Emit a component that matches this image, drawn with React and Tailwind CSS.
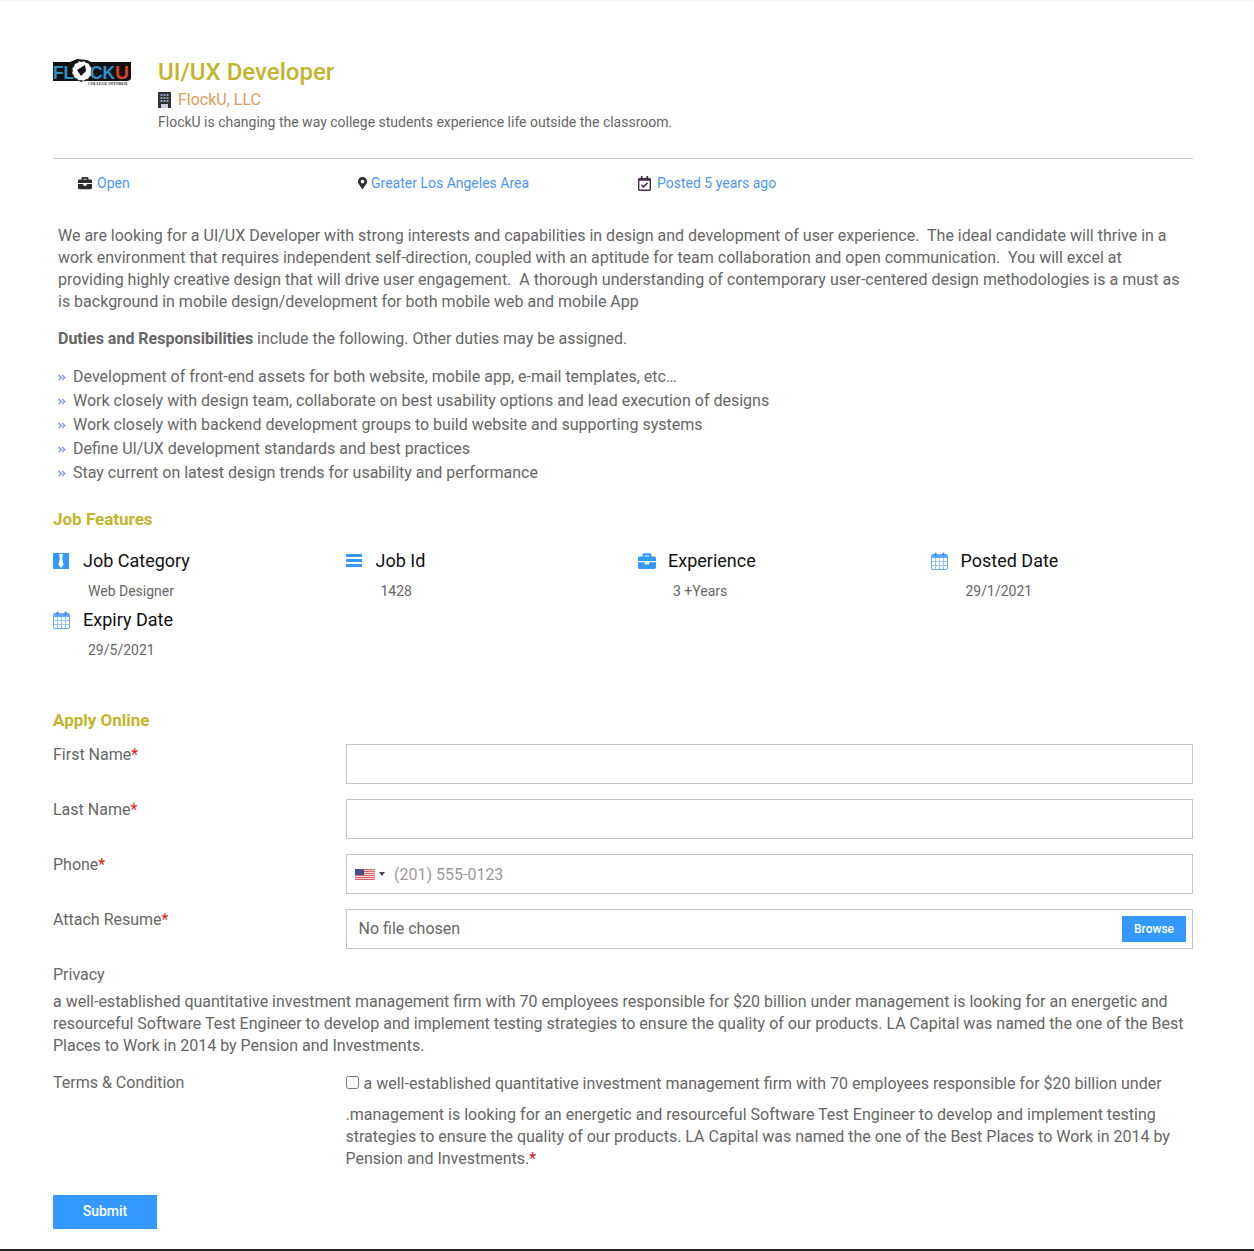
import React from 'react';
import { FaBriefcase, FaMapMarkerAlt, FaRegCalendarCheck, FaAngleDoubleRight } from 'react-icons/fa';

const duties = [
  'Development of front-end assets for both website, mobile app, e-mail templates, etc…',
  'Work closely with design team, collaborate on best usability options and lead execution of designs',
  'Work closely with backend development groups to build website and supporting systems',
  'Define UI/UX development standards and best practices',
  'Stay current on latest design trends for usability and performance',
];

const Logo = () => (
  <svg width="78" height="28" viewBox="0 0 78 28" className="block">
    <path d="M0 3 H17 L24 0 L34 1 L38 3 H78 V19 Q78 22 73 22 H0 Z" fill="#111" />
    <text x="0" y="20" fontFamily="Liberation Sans" fontWeight="700" fontSize="18" fill="#2a93cf" textLength="21" lengthAdjust="spacingAndGlyphs">FL</text>
    <circle cx="29" cy="12" r="10" fill="#fff" stroke="#222" strokeWidth="1.500" strokeDasharray="3 2" />
    <path d="M24 11 L32 6 L33 12 L28 17 Z" fill="#111" />
    <text x="37" y="20" fontFamily="Liberation Sans" fontWeight="700" fontSize="18" fill="#2a93cf" textLength="25" lengthAdjust="spacingAndGlyphs">CK</text>
    <text x="62" y="20" fontFamily="Liberation Sans" fontWeight="700" fontSize="18" fill="#d8402d" textLength="14" lengthAdjust="spacingAndGlyphs">U</text>
    <text x="35" y="26" fontFamily="Liberation Serif" fontWeight="700" fontSize="4" fill="#222" textLength="40" lengthAdjust="spacingAndGlyphs">COLLEGE OFFERED.</text>
  </svg>
);

const BuildingIcon = () => (
  <svg width="13" height="16" viewBox="0 0 13 16" className="shrink-0">
    <rect width="13" height="16" fill="#33302f" />
    {[2, 5, 8].map((x) =>
      [2, 5, 8].map((y) => <rect key={`${x}-${y}`} x={x + 0.5} y={y} width="2" height="2" fill="#8aa0c0" />)
    )}
    <rect x="3" y="12" width="7" height="4" fill="#c9d3e0" />
  </svg>
);

const TieIcon = () => (
  <svg width="16" height="16" viewBox="0 0 16 16">
    <rect width="16" height="16" fill="#3399ff" />
    <path d="M6 1 H10 L9.200 5 L10.500 12 L8 15 L5.500 12 L6.800 5 Z" fill="#fff" />
  </svg>
);

const BarsIcon = () => (
  <svg width="16" height="14" viewBox="0 0 16 14">
    <rect width="16" height="3" fill="#3399ff" />
    <rect y="5" width="16" height="3" fill="#3399ff" />
    <rect y="10" width="16" height="3" fill="#3399ff" />
  </svg>
);

const CalendarIcon = () => (
  <svg width="17" height="18" viewBox="0 0 17 18">
    <rect x="0.500" y="2.500" width="16" height="15" rx="1.500" fill="#fff" stroke="#66aaff" />
    <rect x="0.500" y="2.500" width="16" height="3.500" fill="#66aaff" />
    <rect x="3.500" y="0.500" width="2" height="4" rx="1" fill="#3d8df0" />
    <rect x="11.500" y="0.500" width="2" height="4" rx="1" fill="#3d8df0" />
    <path d="M4.500 6 V17 M8.500 6 V17 M12.500 6 V17 M1 9.500 H16 M1 13.500 H16" stroke="#99c5ff" strokeWidth="1" fill="none" />
  </svg>
);

const Flag = () => (
  <svg width="20" height="11" viewBox="0 0 20 11" className="shrink-0">
    <rect width="20" height="11" fill="#f4d5d8" />
    {[0, 2, 4, 6, 8, 10].map((y) => (
      <rect key={y} y={y} width="20" height="1" fill="#d8606a" />
    ))}
    <rect width="9" height="6" fill="#44508c" />
  </svg>
);

const Feature = ({ icon, title, value }) => (
  <div>
    <div className="flex items-center h-[24px]">
      <span className="w-[30px] shrink-0 flex items-center">{icon}</span>
      <span className="text-[18px] leading-[24px] text-[#111]">{title}</span>
    </div>
    <div className="pl-[35px] mt-[8px] h-[27px] text-[14px] leading-[20px] text-[#666]">{value}</div>
  </div>
);

const Req = () => <span className="text-[#e02020]">*</span>;

const FieldRow = ({ label, children }) => (
  <div className="grid grid-cols-[292.5px_1fr] mb-[15px]">
    <label className="leading-[22px]">
      {label}
      <Req />
    </label>
    <div className="h-[40px] border border-[#c4c4c4] bg-white flex items-center">{children}</div>
  </div>
);

const App = () => {
  return (
    <div className="w-[1254px] h-[1251px] bg-white border-t border-[#f2f2f2] border-b-2 border-b-[#222] pl-[53px] pr-[61px] pt-[57px] text-[16px] leading-[22px] text-[#666] font-['Roboto',sans-serif]">
      {/* Job header */}
      <div className="flex h-[101px] border-b border-[#cccccc]">
        <div className="w-[105px] shrink-0 pt-[1px]">
          <Logo />
        </div>
        <div>
          <h1 className="text-[24px] leading-[28px] font-medium text-[#c2b42c]">UI/UX Developer</h1>
          <div className="flex items-center gap-[7px] mt-[2px] h-[24px] text-[#e09b5a]">
            <BuildingIcon />
            FlockU, LLC
          </div>
          <p className="text-[14px] leading-[20px]">
            FlockU is changing the way college students experience life outside the classroom.
          </p>
        </div>
      </div>

      <div className="flex h-[48px] items-center pl-[25px] text-[14px] text-[#4a96f5]">
        <div className="w-[280px] flex items-center gap-[5px]">
          <FaBriefcase className="text-[14px] text-[#2d2a2a]" />
          Open
        </div>
        <div className="w-[280px] flex items-center gap-[4px]">
          <FaMapMarkerAlt className="h-[12px] w-[9px] text-[#2d2a2a] shrink-0" />
          Greater Los Angeles Area
        </div>
        <div className="flex items-center gap-[6px]">
          <FaRegCalendarCheck className="h-[15px] w-[13px] text-[#4a2a4f]" />
          Posted 5 years ago
        </div>
      </div>

      {/* Description */}
      <div className="px-[5px] mt-[18px]">
        <p className="whitespace-pre-wrap">
          We are looking for a UI/UX Developer with strong interests and capabilities in design and development of user experience.  The ideal candidate will thrive in a work environment that requires independent self-direction, coupled with an aptitude for team collaboration and open communication.  You will excel at providing highly creative design that will drive user engagement.  A thorough understanding of contemporary user-centered design methodologies is a must as is background in mobile design/development for both mobile web and mobile App
        </p>
        <p className="mt-[15px]">
          <strong className="font-bold">Duties and Responsibilities</strong> include the following. Other duties may be assigned.
        </p>
        <ul className="mt-[15px]">
          {duties.map((d) => (
            <li key={d} className="flex items-center h-[24px]">
              <FaAngleDoubleRight className="w-[16px] h-[13px] pr-[8px] mr-[-1px] text-[#7f8ff0] shrink-0" />
              {d}
            </li>
          ))}
        </ul>
      </div>

      {/* Features */}
      <h3 className="mt-[23px] text-[17px] font-bold text-[#c2b42c]">Job Features</h3>
      <div className="grid grid-cols-4 gap-x-[30px] mt-[19px] w-[1140px]">
        <Feature icon={<TieIcon />} title="Job Category" value="Web Designer" />
        <Feature icon={<BarsIcon />} title="Job Id" value="1428" />
        <Feature icon={<FaBriefcase className="text-[#3399ff] text-[18px]" />} title="Experience" value="3 +Years" />
        <Feature icon={<CalendarIcon />} title="Posted Date" value="29/1/2021" />
        <Feature icon={<CalendarIcon />} title="Expiry Date" value="29/5/2021" />
      </div>

      {/* Application form */}
      <h3 className="mt-[42px] text-[17px] font-bold text-[#c2b42c]">Apply Online</h3>
      <form className="mt-[13px] w-[1140px]">
        <FieldRow label="First Name" />
        <FieldRow label="Last Name" />
        <FieldRow label="Phone">
          <div className="flex items-center pl-[8px]">
            <Flag />
            <span className="ml-[4px] border-x-[3px] border-x-transparent border-t-[4px] border-t-[#444]" />
            <span className="ml-[9.5px] pt-[2px] text-[#999]">(201) 555-0123</span>
          </div>
        </FieldRow>
        <FieldRow label="Attach Resume">
          <div className="flex items-center justify-between w-full pl-[12px] pr-[6px]">
            <span>No file chosen</span>
            <button type="button" className="w-[64px] h-[26px] bg-[#3399ff] text-white text-[12px] font-medium">
              Browse
            </button>
          </div>
        </FieldRow>

        <div className="mt-[14px]">Privacy</div>
        <p className="mt-[5px]">
          a well-established quantitative investment management firm with 70 employees responsible for $20 billion under management is looking for an energetic and resourceful Software Test Engineer to develop and implement testing strategies to ensure the quality of our products. LA Capital was named the one of the Best Places to Work in 2014 by Pension and Investments.
        </p>

        <div className="grid grid-cols-[292.5px_1fr] mt-[15px]">
          <div>Terms &amp; Condition</div>
          <div>
            <div className="flex items-center h-[24px] gap-[5px]">
              <input type="checkbox" className="w-[13px] h-[13px] m-0 mb-[3px]" />
              <span>a well-established quantitative investment management firm with 70 employees responsible for $20 billion under</span>
            </div>
            <p className="mt-[8px]">
              .management is looking for an energetic and resourceful Software Test Engineer to develop and implement testing strategies to ensure the quality of our products. LA Capital was named the one of the Best Places to Work in 2014 by Pension and Investments.
              <Req />
            </p>
          </div>
        </div>

        <button type="button" className="mt-[25px] w-[104px] h-[34px] pb-[2px] bg-[#3399ff] text-white text-[14px] font-medium">
          Submit
        </button>
      </form>
    </div>
  );
};

export default App;
